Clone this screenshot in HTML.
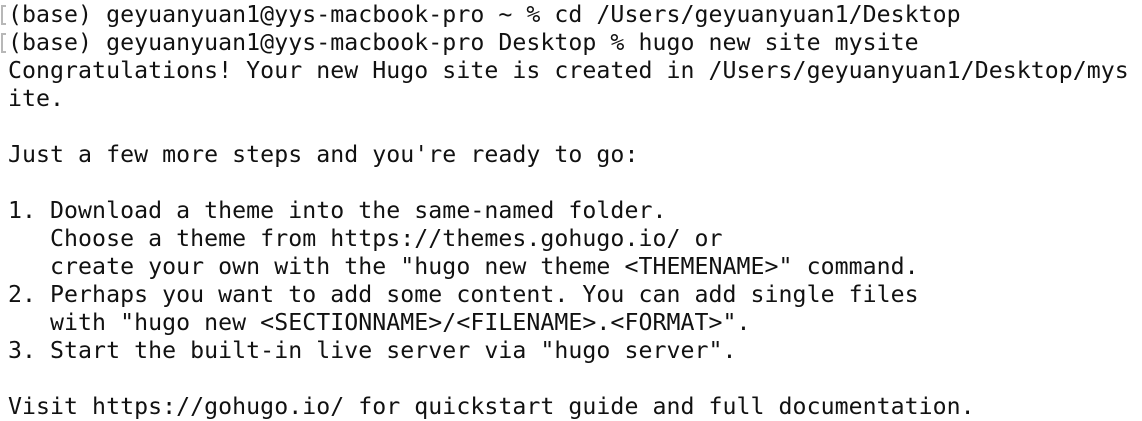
<!DOCTYPE html>
<html><head><meta charset="utf-8"><style>
html,body{margin:0;padding:0;background:#fff;width:1142px;height:420px;overflow:hidden}
pre{margin:0;position:absolute;left:8px;top:1px;font-family:"DejaVu Sans Mono","Liberation Mono",monospace;font-size:23.2px;line-height:28px;color:#111;letter-spacing:0.05px}
.b{position:absolute;left:1px;width:5px;height:20px;border:2px solid #b8b8b8;border-right:none;box-sizing:border-box}
</style></head><body>
<div class="b" style="top:5px"></div>
<div class="b" style="top:33px"></div>
<pre>(base) geyuanyuan1@yys-macbook-pro ~ % cd /Users/geyuanyuan1/Desktop
(base) geyuanyuan1@yys-macbook-pro Desktop % hugo new site mysite
Congratulations! Your new Hugo site is created in /Users/geyuanyuan1/Desktop/mys
ite.

Just a few more steps and you're ready to go:

1. Download a theme into the same-named folder.
   Choose a theme from https://themes.gohugo.io/ or
   create your own with the "hugo new theme &lt;THEMENAME&gt;" command.
2. Perhaps you want to add some content. You can add single files
   with "hugo new &lt;SECTIONNAME&gt;/&lt;FILENAME&gt;.&lt;FORMAT&gt;".
3. Start the built-in live server via "hugo server".

Visit https://gohugo.io/ for quickstart guide and full documentation.</pre>
</body></html>
